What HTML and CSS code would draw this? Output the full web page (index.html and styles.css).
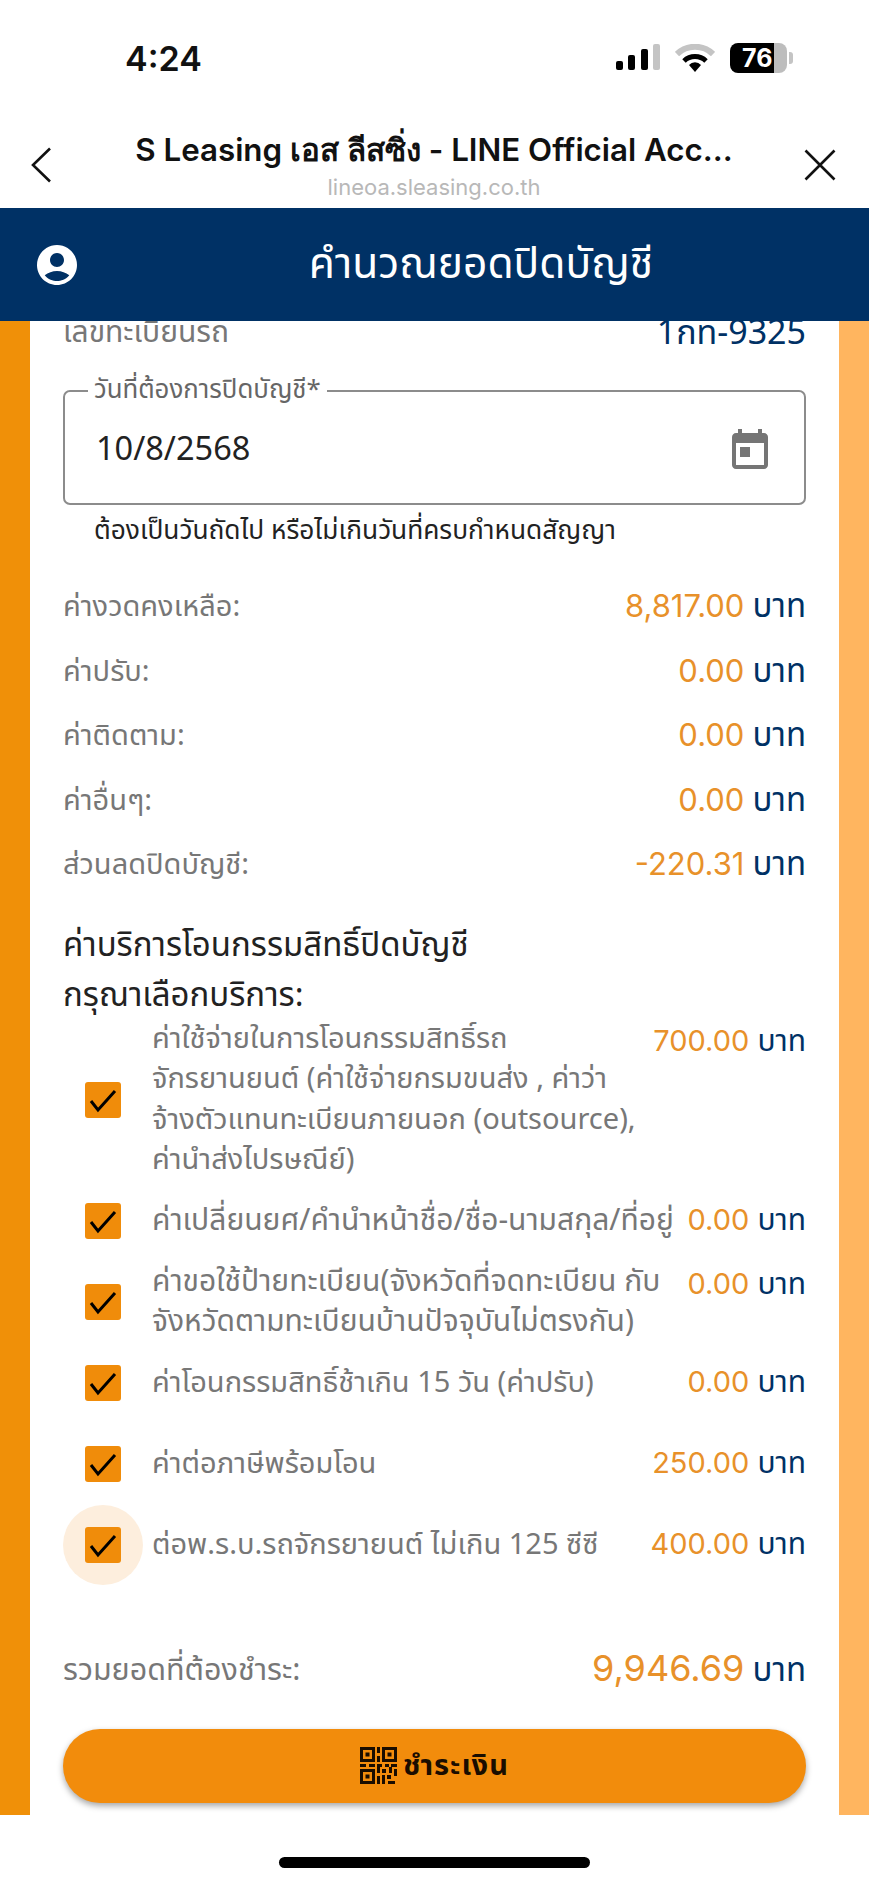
FILE: index.html
```html
<!DOCTYPE html>
<html lang="th">
  <head>
    <meta charset="utf-8">
    <title>คำนวณยอดปิดบัญชี</title>
    <link rel="stylesheet" href="styles.css">
  </head>
  <body>
    <div class="status-bar">
      <span class="clock">4:24</span>
      <div class="status-icons">
        <svg class="signal" width="44" height="28" viewBox="0 0 44 28">
          <rect x="0" y="17" width="7" height="9" rx="2" fill="#000"/>
          <rect x="12" y="11" width="7" height="15" rx="2" fill="#000"/>
          <rect x="25" y="5" width="7" height="21" rx="2" fill="#000"/>
          <rect x="37" y="0" width="7" height="26" rx="2" fill="#c4c4c4"/>
        </svg>
        <svg class="wifi" width="40" height="28" viewBox="0 0 40 28">
          <path d="M2 10a26 26 0 0 1 36 0" fill="none" stroke="#c4c4c4" stroke-width="6"/>
          <path d="M9 17a16 16 0 0 1 22 0" fill="none" stroke="#000" stroke-width="5"/>
          <path d="M20 28l-6-7a8 8 0 0 1 12 0z" fill="#000"/>
        </svg>
        <div class="battery"><span>76</span></div>
        <div class="battery-tip"></div>
      </div>
    </div>

    <div class="browser-bar">
      <svg class="browser-back" width="22" height="36" viewBox="0 0 22 36">
        <path d="M20 1.500L3 18l17 16.500" fill="none" stroke="#111" stroke-width="2.600"/>
      </svg>
      <div class="browser-title">
        <div class="browser-name">S Leasing เอส ลีสซิ่ง - LINE Official Acc...</div>
        <div class="browser-url">lineoa.sleasing.co.th</div>
      </div>
      <svg class="browser-close" width="32" height="32" viewBox="0 0 32 32">
        <path d="M1.500 1.500l29 29M30.500 1.500l-29 29" fill="none" stroke="#111" stroke-width="2.600"/>
      </svg>
    </div>

    <div class="app-header">
      <svg class="user-icon" width="48" height="48" viewBox="0 0 24 24">
        <path fill="#fff" d="M12 2C6.480 2 2 6.480 2 12s4.480 10 10 10 10-4.480 10-10S17.520 2 12 2zm0 4c1.930 0 3.500 1.570 3.500 3.500S13.930 13 12 13s-3.500-1.570-3.500-3.500S10.070 6 12 6zm0 14c-2.030 0-4.430-.82-6.140-2.880C7.550 15.800 9.680 15 12 15s4.450.8 6.140 2.120C16.430 19.180 14.030 20 12 20z"/>
      </svg>
      <h1 class="app-title">คำนวณยอดปิดบัญชี</h1>
    </div>

    <div class="main">
      <div class="plate-row">
        <span class="row-label plate-label">เลขทะเบียนรถ</span>
        <span class="plate-no">1กท-9325</span>
      </div>

      <fieldset class="date-field">
        <legend>วันที่ต้องการปิดบัญชี*</legend>
        <span class="date-value">10/8/2568</span>
        <svg width="48" height="48" viewBox="0 0 24 24">
          <path fill="#757575" d="M19 3h-1V1h-2v2H8V1H6v2H5c-1.110 0-1.990.9-1.990 2L3 19c0 1.100.89 2 2 2h14c1.100 0 2-.9 2-2V5c0-1.100-.9-2-2-2zm0 16H5V8h14v11zM7 10h5v5H7z"/>
        </svg>
      </fieldset>
      <p class="date-help">ต้องเป็นวันถัดไป หรือไม่เกินวันที่ครบกำหนดสัญญา</p>

      <div class="amounts">
        <div class="amount-row"><span class="row-label">ค่างวดคงเหลือ:</span><span><span class="money">8,817.00</span> <span class="baht">บาท</span></span></div>
        <div class="amount-row"><span class="row-label">ค่าปรับ:</span><span><span class="money">0.00</span> <span class="baht">บาท</span></span></div>
        <div class="amount-row"><span class="row-label">ค่าติดตาม:</span><span><span class="money">0.00</span> <span class="baht">บาท</span></span></div>
        <div class="amount-row"><span class="row-label">ค่าอื่นๆ:</span><span><span class="money">0.00</span> <span class="baht">บาท</span></span></div>
        <div class="amount-row"><span class="row-label">ส่วนลดปิดบัญชี:</span><span><span class="money">-220.31</span> <span class="baht">บาท</span></span></div>
      </div>

      <h3 class="section-title">ค่าบริการโอนกรรมสิทธิ์ปิดบัญชี</h3>
      <h3 class="section-title">กรุณาเลือกบริการ:</h3>

      <div class="services">
        <div class="service service-tall">
          <div class="check-wrap"><div class="check"><svg width="36" height="36" viewBox="0 0 36 36"><path d="M6 19l7 9L30 9" fill="none" stroke="#000" stroke-width="3"/></svg></div></div>
          <div class="service-text">ค่าใช้จ่ายในการโอนกรรมสิทธิ์รถ<br>จักรยานยนต์ (ค่าใช้จ่ายกรมขนส่ง , ค่าว่า<br>จ้างตัวแทนทะเบียนภายนอก (outsource),<br>ค่านำส่งไปรษณีย์)</div>
          <div class="service-price"><span class="money">700.00</span> <span class="baht">บาท</span></div>
        </div>
        <div class="service">
          <div class="check-wrap"><div class="check"><svg width="36" height="36" viewBox="0 0 36 36"><path d="M6 19l7 9L30 9" fill="none" stroke="#000" stroke-width="3"/></svg></div></div>
          <div class="service-text service-text-wide">ค่าเปลี่ยนยศ/คำนำหน้าชื่อ/ชื่อ-นามสกุล/ที่อยู่</div>
          <div class="service-price"><span class="money">0.00</span> <span class="baht">บาท</span></div>
        </div>
        <div class="service service-tall">
          <div class="check-wrap"><div class="check"><svg width="36" height="36" viewBox="0 0 36 36"><path d="M6 19l7 9L30 9" fill="none" stroke="#000" stroke-width="3"/></svg></div></div>
          <div class="service-text service-text-wide">ค่าขอใช้ป้ายทะเบียน(จังหวัดที่จดทะเบียน กับ<br>จังหวัดตามทะเบียนบ้านปัจจุบันไม่ตรงกัน)</div>
          <div class="service-price"><span class="money">0.00</span> <span class="baht">บาท</span></div>
        </div>
        <div class="service">
          <div class="check-wrap"><div class="check"><svg width="36" height="36" viewBox="0 0 36 36"><path d="M6 19l7 9L30 9" fill="none" stroke="#000" stroke-width="3"/></svg></div></div>
          <div class="service-text">ค่าโอนกรรมสิทธิ์ช้าเกิน 15 วัน (ค่าปรับ)</div>
          <div class="service-price"><span class="money">0.00</span> <span class="baht">บาท</span></div>
        </div>
        <div class="service">
          <div class="check-wrap"><div class="check"><svg width="36" height="36" viewBox="0 0 36 36"><path d="M6 19l7 9L30 9" fill="none" stroke="#000" stroke-width="3"/></svg></div></div>
          <div class="service-text">ค่าต่อภาษีพร้อมโอน</div>
          <div class="service-price"><span class="money">250.00</span> <span class="baht">บาท</span></div>
        </div>
        <div class="service">
          <div class="check-wrap check-focus"><div class="check"><svg width="36" height="36" viewBox="0 0 36 36"><path d="M6 19l7 9L30 9" fill="none" stroke="#000" stroke-width="3"/></svg></div></div>
          <div class="service-text">ต่อพ.ร.บ.รถจักรยายนต์ ไม่เกิน 125 ซีซี</div>
          <div class="service-price"><span class="money">400.00</span> <span class="baht">บาท</span></div>
        </div>
      </div>

      <div class="total-row">
        <span class="row-label total-label">รวมยอดที่ต้องชำระ:</span>
        <span><span class="money total-money">9,946.69</span> <span class="baht">บาท</span></span>
      </div>

      <button class="pay-button" type="button">
        <svg width="37" height="37" viewBox="0 0 37 37" fill="#1a0d00">
          <path fill-rule="evenodd" d="M0 0h15v15H0zM3 3v9h9V3zM22 0h15v15H22zM25 3v9h9V3zM0 22h15v15H0zM3 25v9h9v-9z"/>
          <path d="M5.500 5.500h4v4h-4zM27.500 5.500h4v4h-4zM5.500 27.500h4v4h-4zM17 0h3v6h-3zM17 9h3v6h-3zM0 17h6v3H0zM9 17h6v3H9zM17 17h5v3h-5zM25 17h4v3h-4zM31 17h6v3h-6zM17 20h3v6h-3zM22 22h4v4h-4zM29 20h3v6h-3zM34 22h3v7h-3zM17 29h3v8h-3zM22 28h3v9h-3zM27 28h4v4h-4zM28 34h7v3h-7z"/>
        </svg>
        <span>ชำระเงิน</span>
      </button>
    </div>

    <div class="home-area"><div class="home-bar"></div></div>
  </body>
</html>
```

FILE: styles.css
```css
* {
  box-sizing: border-box;
}
body {
  margin: 0;
  background-color: #fff;
  font-family: "Noto Sans Thai", "Noto Sans Thai Looped", Lato, "Noto Sans", sans-serif;
  color: #222;
}

/* phone status bar */
.status-bar {
  height: 110px;
  padding: 0 76px 0 125px;
  display: flex;
  justify-content: space-between;
  align-items: flex-start;
}
.clock {
  margin-top: 38px;
  font-family: Inter, sans-serif;
  font-size: 34px;
  line-height: 42px;
  font-weight: 600;
  color: #111;
}
.status-icons {
  margin-top: 43px;
  display: flex;
  align-items: center;
}
.wifi {
  margin-left: 15px;
}
.battery {
  margin-left: 15px;
  width: 57px;
  height: 30px;
  border-radius: 8px;
  background: linear-gradient(to right, #000 77%, #bdbdbd 77%);
  padding-left: 12px;
  color: #fff;
  font-family: Inter, sans-serif;
  font-size: 25px;
  line-height: 30px;
  font-weight: 700;
}
.battery-tip {
  margin-left: 2px;
  width: 4px;
  height: 12px;
  border-radius: 0 3px 3px 0;
  background-color: #c4c4c4;
}

/* in-app browser bar */
.browser-bar {
  height: 98px;
  display: flex;
  padding: 0 33px 0 30px;
}
.browser-back {
  margin-top: 37px;
}
.browser-close {
  margin-top: 39px;
}
.browser-title {
  flex: 1;
  text-align: center;
  padding: 24px 0 0 12px;
}
.browser-name {
  font-family: Inter, sans-serif;
  font-size: 31.300px;
  line-height: 32px;
  font-weight: 600;
  color: #111;
  white-space: nowrap;
}
.browser-url {
  margin-top: 9px;
  font-family: Inter, sans-serif;
  font-size: 22px;
  line-height: 24px;
  color: #b8b8b8;
}

/* app header */
.app-header {
  height: 113px;
  background-color: #003165;
  display: flex;
  align-items: center;
  padding-left: 33px;
}
.user-icon {
  flex: none;
}
.app-title {
  flex: 1;
  margin: 0 0 0 12px;
  text-align: center;
  font-size: 42.500px;
  font-weight: 400;
  color: #fff;
}

/* page body between the orange bars */
.main {
  height: 1494px;
  overflow: hidden;
  border-left: 30px solid #f09008;
  border-right: 30px solid #ffb55f;
  padding: 0 33px;
}
.plate-row {
  margin-top: -8px;
  height: 40px;
  display: flex;
  justify-content: space-between;
  align-items: center;
}
.row-label {
  font-size: 29px;
  color: #777;
}
.plate-label {
  font-size: 30px;
}
.plate-no {
  font-size: 34px;
  color: #003165;
}

.date-field {
  margin: 27px 0 0;
  height: 125px;
  padding: 0 30px 4px 31px;
  border: 2px solid #8c8c8c;
  border-radius: 7px;
  display: flex;
  justify-content: space-between;
  align-items: center;
}
.date-field legend {
  padding: 0 6px;
  margin-left: -8px;
  font-size: 25.800px;
  line-height: 22px;
  color: #666;
}
.date-value {
  font-size: 32.500px;
  color: #222;
}
.date-help {
  margin: 10px 0 0 31px;
  font-size: 26.300px;
  line-height: 32px;
  color: #222;
}

.amounts {
  margin-top: 28px;
}
.amount-row {
  height: 64.500px;
  display: flex;
  justify-content: space-between;
  align-items: center;
  white-space: nowrap;
}
.money {
  font-family: Inter, sans-serif;
  font-size: 31px;
  color: #e8912a;
}
.baht {
  margin-left: 4px;
  font-size: 33px;
  color: #003165;
}

.section-title {
  margin: 0;
  height: 50px;
  font-size: 33px;
  line-height: 50px;
  font-weight: 400;
  color: #222;
}
.amounts + .section-title {
  margin-top: 23px;
}

.services {
  margin-top: -2px;
}
.service {
  min-height: 81px;
  display: flex;
  align-items: center;
}
.service-tall {
  align-items: flex-start;
}
.check-wrap {
  flex: none;
  width: 80px;
  height: 80px;
  border-radius: 50%;
  display: flex;
  align-items: center;
  justify-content: center;
}
.service-tall .check-wrap {
  align-self: center;
}
.check-focus {
  background-color: #fdeedd;
}
.check {
  width: 36px;
  height: 36px;
  border-radius: 3px;
  background-color: #f08c0a;
}
.check svg {
  display: block;
}
.service-text {
  flex: 1;
  margin-left: 9px;
  font-size: 29px;
  line-height: 40.500px;
  color: #777;
  white-space: nowrap;
}
.service-text-wide {
  font-size: 30px;
}
.service-price {
  padding-top: 4px;
  white-space: nowrap;
  line-height: 40.500px;
}
.service-tall .service-price {
  padding-top: 2px;
}
.service-price .money {
  font-size: 29px;
}
.service-price .baht {
  font-size: 30px;
}

.total-row {
  margin-top: 59px;
  height: 52px;
  display: flex;
  justify-content: space-between;
  align-items: center;
  white-space: nowrap;
}
.total-label {
  font-size: 30.500px;
}
.total-money {
  font-size: 36px;
}

.pay-button {
  margin-top: 32px;
  width: 100%;
  height: 74px;
  border: 0;
  border-radius: 37px;
  background-color: #f28c0c;
  box-shadow: 0 3px 6px rgba(0, 0, 0, 0.35);
  display: flex;
  justify-content: center;
  align-items: center;
  gap: 6px;
  font-family: "Noto Sans Thai", "Noto Sans", sans-serif;
  font-size: 29px;
  font-weight: 700;
  letter-spacing: 1px;
  color: #1a0d00;
}

/* home indicator */
.home-area {
  height: 69px;
  padding-top: 42px;
}
.home-bar {
  margin: 0 auto;
  width: 311px;
  height: 11px;
  border-radius: 6px;
  background-color: #000;
}
```
